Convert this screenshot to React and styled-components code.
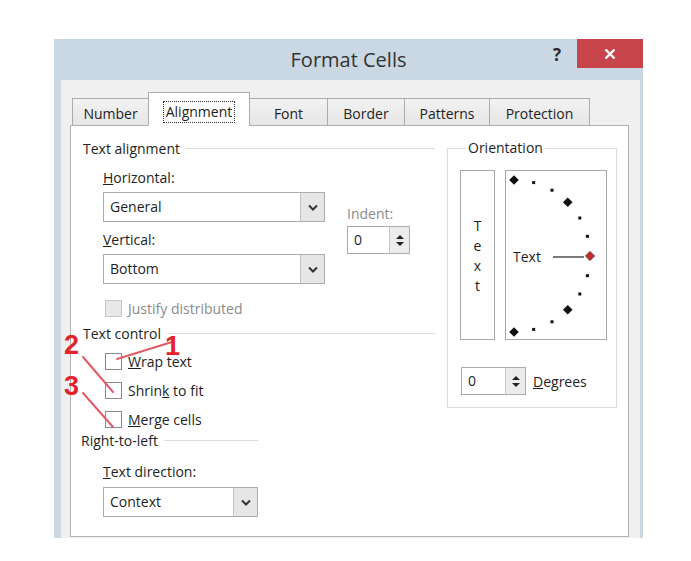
import styled, { createGlobalStyle } from 'styled-components';

const GlobalStyle = createGlobalStyle`
  html, body {
    margin: 0;
    background: #fff;
  }
  body {
    font-family: 'Open Sans', 'Noto Sans', sans-serif;
    font-size: 14px;
    color: #1e1e1e;
  }
`;

const Page = styled.div`
  position: relative;
  width: 691px;
  height: 561px;
  box-sizing: border-box;
  padding: 39px 0 0 54px;
  overflow: hidden;
`;

const Window = styled.div`
  width: 589px;
  height: 499px;
  background: #cad8e4;
  display: flex;
  flex-direction: column;
  overflow: hidden;
`;

const TitleBar = styled.div`
  height: 41px;
  flex-shrink: 0;
  display: grid;
  grid-template-columns: 1fr auto 1fr;
`;

const Title = styled.div`
  grid-column: 2;
  align-self: center;
  margin-top: -1px;
  font-size: 20px;
  color: #333;
`;

const Controls = styled.div`
  grid-column: 3;
  justify-self: end;
  display: flex;
  align-items: flex-start;
`;

const HelpButton = styled.div`
  width: 20px;
  margin: 4px 10px 0 0;
  text-align: center;
  font-size: 17px;
  font-weight: 700;
  color: #2b2b2b;
`;

const CloseButton = styled.div`
  width: 66px;
  height: 29px;
  background: #c7444b;
  display: flex;
  align-items: center;
  justify-content: center;
`;

const Body = styled.div`
  flex: 1;
  margin: 0 3px 0 7px;
  padding: 13px 11px 0 9px;
  background: #f0f0f0;
`;

const TabRow = styled.div`
  display: flex;
  align-items: flex-end;
  height: 33px;
  padding-left: 3px;
  margin-bottom: -1px;
  position: relative;
  z-index: 1;
`;

const Tab = styled.div`
  box-sizing: border-box;
  width: ${(p) => p.$w}px;
  height: ${(p) => (p.$active ? 34 : 28)}px;
  border: 1px solid #acacac;
  border-bottom: ${(p) => (p.$active ? '1px solid #fff' : '1px solid #acacac')};
  margin-left: -1px;
  background: ${(p) => (p.$active ? '#fff' : 'linear-gradient(#f2f2f2, #e6e6e6)')};
  display: flex;
  align-items: center;
  justify-content: center;
  padding-top: ${(p) => (p.$active ? 5 : 3)}px;
  font-size: 14px;
`;

const FocusRing = styled.span`
  border: 1px dotted #333;
  padding: 0 2px;
  line-height: 20px;
`;

const Panel = styled.div`
  box-sizing: border-box;
  height: 412px;
  background: #fff;
  border: 1px solid #b0b0b0;
  padding: 12px 11px 0 12px;
  display: grid;
  grid-template-columns: 352px 170px;
  column-gap: 12px;
  align-items: start;
`;

const Column = styled.div`
  display: flex;
  flex-direction: column;
`;

const GroupHead = styled.div`
  display: flex;
  align-items: center;
  height: 20px;
  width: ${(p) => (p.$w ? `${p.$w}px` : 'auto')};
  margin-top: ${(p) => p.$mt || 0}px;
  margin-left: ${(p) => p.$ml || 0}px;

  &::after {
    content: '';
    flex: 1;
    height: 1px;
    margin-left: 6px;
    background: #dcdcdc;
  }
`;

const Indented = styled.div`
  display: flex;
  flex-direction: column;
  padding-left: 20px;
`;

const Label = styled.div`
  height: 18px;
  line-height: 18px;
  margin-top: ${(p) => p.$mt || 0}px;
  color: ${(p) => (p.$muted ? '#8a8a8a' : 'inherit')};
  white-space: nowrap;
`;

const AlignRow = styled.div`
  display: flex;
  gap: 22px;
  margin-top: 11px;
`;

const FormColumn = styled.div`
  display: flex;
  flex-direction: column;
  width: 222px;
`;

const IndentColumn = styled.div`
  display: flex;
  flex-direction: column;
  padding-top: 36px;
`;

const ComboBox = styled.div`
  box-sizing: border-box;
  width: ${(p) => p.$w}px;
  height: 30px;
  margin-top: ${(p) => p.$mt || 0}px;
  border: 1px solid #acacac;
  background: #fff;
  display: flex;
`;

const ComboValue = styled.div`
  flex: 1;
  padding-left: 6px;
  line-height: 28px;
`;

const ComboArrow = styled.div`
  width: 23px;
  background: #e6e6e6;
  border-left: 1px solid #c4c4c4;
  display: flex;
  align-items: center;
  justify-content: center;
`;

const Spinner = styled.div`
  box-sizing: border-box;
  width: ${(p) => p.$w}px;
  height: 28px;
  margin-top: ${(p) => p.$mt || 0}px;
  border: 1px solid #acacac;
  background: #fff;
  display: flex;
`;

const SpinValue = styled.div`
  flex: 1;
  padding-left: 6px;
  line-height: 26px;
`;

const SpinButtons = styled.div`
  width: 19px;
  background: #ececec;
  border-left: 1px solid #c8c8c8;
  display: flex;
  flex-direction: column;
  align-items: center;
  justify-content: center;
  gap: 3px;
`;

const Arrow = styled.span`
  width: 0;
  height: 0;
  border-left: 4px solid transparent;
  border-right: 4px solid transparent;
  ${(p) => (p.$down ? 'border-top: 4px solid #222;' : 'border-bottom: 4px solid #222;')}
`;

const CheckRow = styled.label`
  display: flex;
  align-items: center;
  gap: 6px;
  height: 18px;
  margin-top: ${(p) => p.$mt || 0}px;
  padding-left: 2px;
  color: ${(p) => (p.$disabled ? '#8a8a8a' : 'inherit')};
`;

const Box = styled.span`
  box-sizing: border-box;
  width: 17px;
  height: 17px;
  border: 1px solid ${(p) => (p.$disabled ? '#c6c6c6' : '#8a8a8a')};
  background: ${(p) => (p.$disabled ? '#e8e8e8' : '#fff')};
`;

const Orientation = styled.fieldset`
  margin: 0;
  padding: 0 0 12px 12px;
  border: 1px solid #dcdcdc;
  min-width: 0;
`;

const Legend = styled.legend`
  margin-left: 6px;
  padding: 0 2px;
  line-height: 20px;
`;

const OrientRow = styled.div`
  display: flex;
  gap: 10px;
  margin-top: 12px;
`;

const StackedText = styled.div`
  box-sizing: border-box;
  width: 35px;
  height: 170px;
  border: 1px solid #a8a8a8;
  display: flex;
  flex-direction: column;
  align-items: center;
  justify-content: center;
  line-height: 20px;
  padding-top: 2px;
`;

const Dial = styled.div`
  box-sizing: border-box;
  width: 102px;
  height: 170px;
  border: 1px solid #a8a8a8;
  display: flex;
`;

const DegreeRow = styled.div`
  display: flex;
  align-items: center;
  gap: 7px;
  margin-top: 27px;
  margin-left: 1px;
`;

const Marks = styled.svg`
  position: absolute;
  left: 0;
  top: 0;
  pointer-events: none;
`;

const tabs = [
  { name: 'Number', w: 77 },
  { name: 'Alignment', w: 102, active: true },
  { name: 'Font', w: 79 },
  { name: 'Border', w: 78 },
  { name: 'Patterns', w: 86 },
  { name: 'Protection', w: 101 },
];

function Chevron() {
  return (
    <svg width="10" height="7" viewBox="0 0 10 7">
      <polyline points="1,1.5 5,5.5 9,1.5" fill="none" stroke="#333" strokeWidth="2" />
    </svg>
  );
}

function Combo({ value, width, mt }) {
  return (
    <ComboBox $w={width} $mt={mt}>
      <ComboValue>{value}</ComboValue>
      <ComboArrow>
        <Chevron />
      </ComboArrow>
    </ComboBox>
  );
}

function Spin({ width, mt }) {
  return (
    <Spinner $w={width} $mt={mt}>
      <SpinValue>0</SpinValue>
      <SpinButtons>
        <Arrow />
        <Arrow $down />
      </SpinButtons>
    </Spinner>
  );
}

function Check({ children, mt, disabled }) {
  return (
    <CheckRow $mt={mt} $disabled={disabled}>
      <Box $disabled={disabled} />
      <span>{children}</span>
    </CheckRow>
  );
}

// semicircle of ticks every 15 degrees, centre on the left edge
function OrientationDial() {
  const cx = 8;
  const cy = 85;
  const r = 76;
  const ticks = [];
  for (let a = -90; a <= 90; a += 15) {
    const rad = (a * Math.PI) / 180;
    const x = cx + r * Math.cos(rad);
    const y = cy - r * Math.sin(rad);
    if (a === 0) {
      ticks.push(
        <rect key={a} x={x - 3.2} y={y - 3.2} width="6.4" height="6.4" fill="#d3232d" stroke="#333" strokeWidth="0.8" transform={`rotate(45 ${x} ${y})`} />
      );
    } else if (a % 45 === 0) {
      ticks.push(<rect key={a} x={x - 3.4} y={y - 3.4} width="6.8" height="6.8" fill="#111" transform={`rotate(45 ${x} ${y})`} />);
    } else {
      ticks.push(<rect key={a} x={x - 1.5} y={y - 1.5} width="3" height="3" fill="#111" />);
    }
  }
  return (
    <svg width="100" height="168" viewBox="0 0 100 168">
      <text x="7" y="91" fontFamily="'Open Sans', sans-serif" fontSize="14" fill="#1e1e1e">
        Text
      </text>
      <line x1="47" y1="86" x2="78" y2="86" stroke="#222" strokeWidth="1.2" />
      {ticks}
    </svg>
  );
}

function Annotations() {
  return (
    <Marks width="691" height="561" viewBox="0 0 691 561">
      <g stroke="#e25a68" strokeWidth="2" strokeLinecap="round">
        <line x1="172" y1="342" x2="117" y2="359" />
        <line x1="83" y1="357" x2="113" y2="392" />
        <line x1="83" y1="393" x2="113" y2="427" />
      </g>
      <g fontFamily="'Liberation Sans', Arial, sans-serif" fontWeight="700" fontSize="27" fill="#e3222c">
        <text x="165" y="355">1</text>
        <text x="64" y="354">2</text>
        <text x="64" y="395">3</text>
      </g>
    </Marks>
  );
}

export default function App() {
  return (
    <Page>
      <GlobalStyle />
      <Window>
        <TitleBar>
          <Title>Format Cells</Title>
          <Controls>
            <HelpButton>?</HelpButton>
            <CloseButton>
              <svg width="12" height="12" viewBox="0 0 12 12">
                <path d="M1.5 1.5 L10.5 10.5 M10.5 1.5 L1.5 10.5" stroke="#fff" strokeWidth="2.4" />
              </svg>
            </CloseButton>
          </Controls>
        </TitleBar>
        <Body>
          <TabRow>
            {tabs.map((t) => (
              <Tab key={t.name} $w={t.w} $active={t.active}>
                {t.active ? <FocusRing>{t.name}</FocusRing> : t.name}
              </Tab>
            ))}
          </TabRow>
          <Panel>
            <Column>
              <GroupHead>Text alignment</GroupHead>
              <Indented>
                <AlignRow>
                  <FormColumn>
                    <Label>
                      <u>H</u>orizontal:
                    </Label>
                    <Combo value="General" width={222} mt={5} />
                    <Label $mt={9}>
                      <u>V</u>ertical:
                    </Label>
                    <Combo value="Bottom" width={222} mt={5} />
                  </FormColumn>
                  <IndentColumn>
                    <Label $muted>Indent:</Label>
                    <Spin width={63} mt={3} />
                  </IndentColumn>
                </AlignRow>
                <Check disabled mt={15}>
                  Justify distributed
                </Check>
              </Indented>
              <GroupHead $mt={6}>Text control</GroupHead>
              <Indented>
                <Check mt={9}>
                  <u>W</u>rap text
                </Check>
                <Check mt={11}>
                  Shrin<u>k</u> to fit
                </Check>
                <Check mt={11}>
                  <u>M</u>erge cells
                </Check>
              </Indented>
              <GroupHead $w={177} $ml={-2} $mt={2}>
                Right-to-left
              </GroupHead>
              <Indented>
                <Label $mt={13}>
                  <u>T</u>ext direction:
                </Label>
                <Combo value="Context" width={155} mt={6} />
              </Indented>
            </Column>
            <Orientation>
              <Legend>Orientation</Legend>
              <OrientRow>
                <StackedText>
                  <span>T</span>
                  <span>e</span>
                  <span>x</span>
                  <span>t</span>
                </StackedText>
                <Dial>
                  <OrientationDial />
                </Dial>
              </OrientRow>
              <DegreeRow>
                <Spin width={65} />
                <span>
                  <u>D</u>egrees
                </span>
              </DegreeRow>
            </Orientation>
          </Panel>
        </Body>
      </Window>
      <Annotations />
    </Page>
  );
}
